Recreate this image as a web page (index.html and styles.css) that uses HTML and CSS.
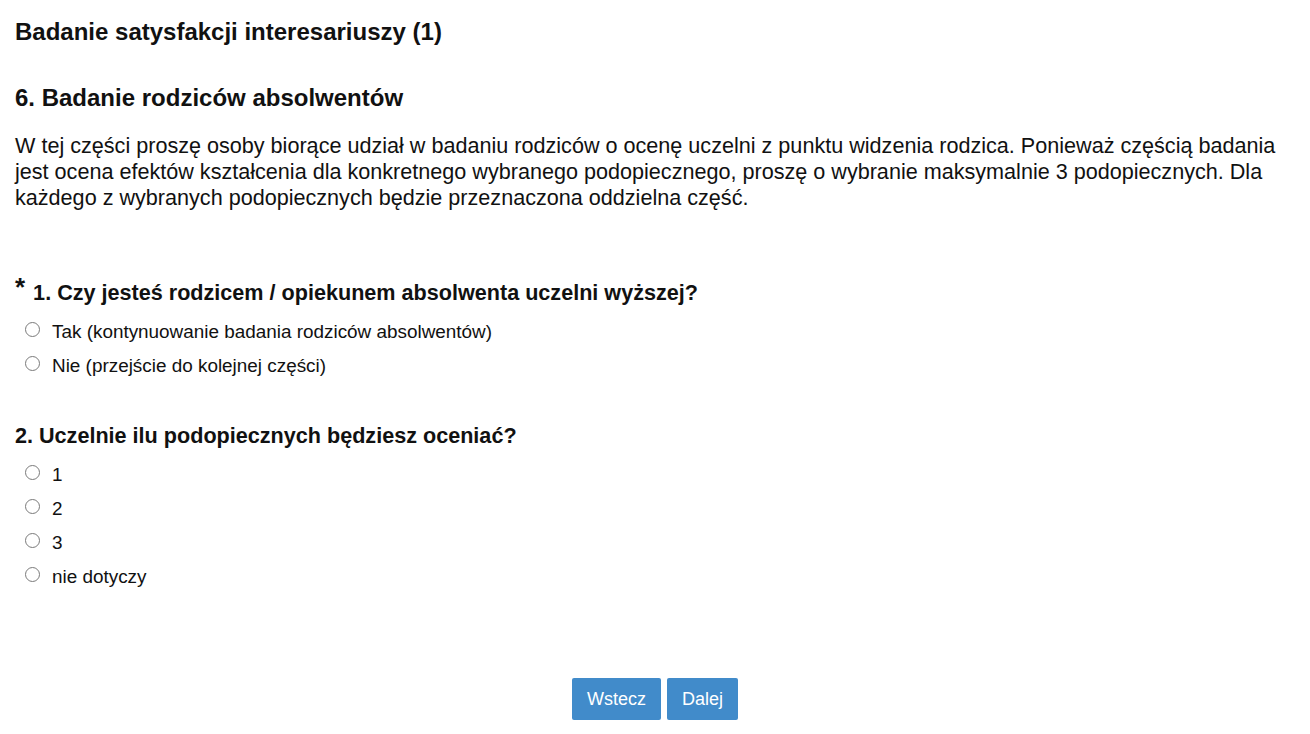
FILE: index.html
```html
<!DOCTYPE html>
<html lang="pl">
<head>
<meta charset="utf-8">
<title>Badanie satysfakcji interesariuszy</title>
<link rel="stylesheet" href="styles.css">
</head>
<body>
<div class="page">
  <h1 class="survey-title">Badanie satysfakcji interesariuszy (1)</h1>
  <h2 class="section-title">6. Badanie rodziców absolwentów</h2>
  <p class="intro">W tej części proszę osoby biorące udział w badaniu rodziców o ocenę uczelni z punktu widzenia rodzica. Ponieważ częścią badania jest ocena efektów kształcenia dla konkretnego wybranego podopiecznego, proszę o wybranie maksymalnie 3 podopiecznych. Dla każdego z wybranych podopiecznych będzie przeznaczona oddzielna część.</p>

  <div class="question q1">
    <h3 class="q-title"><span class="req">*</span> 1. Czy jesteś rodzicem / opiekunem absolwenta uczelni wyższej?</h3>
    <label class="opt"><input type="radio" name="q1"><span>Tak (kontynuowanie badania rodziców absolwentów)</span></label>
    <label class="opt"><input type="radio" name="q1"><span>Nie (przejście do kolejnej części)</span></label>
  </div>

  <div class="question q2">
    <h3 class="q-title">2. Uczelnie ilu podopiecznych będziesz oceniać?</h3>
    <label class="opt"><input type="radio" name="q2"><span>1</span></label>
    <label class="opt"><input type="radio" name="q2"><span>2</span></label>
    <label class="opt"><input type="radio" name="q2"><span>3</span></label>
    <label class="opt"><input type="radio" name="q2"><span>nie dotyczy</span></label>
  </div>

  <div class="nav">
    <button class="btn" type="button">Wstecz</button>
    <button class="btn" type="button">Dalej</button>
  </div>
</div>
</body>
</html>
```

FILE: styles.css
```css
html, body {
  margin: 0;
  padding: 0;
  background: #ffffff;
}
body {
  font-family: "Liberation Sans", Arial, sans-serif;
  color: #111111;
}
.page {
  padding: 0 15px;
  display: flex;
  flex-direction: column;
}
.survey-title {
  font-size: 24px;
  font-weight: bold;
  margin: 18px 0 0;
  line-height: 28px;
}
.section-title {
  font-size: 24px;
  font-weight: bold;
  margin: 38px 0 0;
  line-height: 28px;
}
.intro {
  font-size: 21.6px;
  line-height: 26px;
  margin: 21px 0 0;
}
.question {
  display: flex;
  flex-direction: column;
}
.q1 { margin-top: 69px; }
.q2 { margin-top: 40px; }
.q-title {
  font-size: 21.6px;
  font-weight: bold;
  margin: 0 0 9px;
  line-height: 26px;
}
.req {
  font-size: 26px;
  vertical-align: 4px;
  line-height: 0;
  margin-right: 2px;
}
.opt {
  display: flex;
  align-items: center;
  height: 34px;
  font-size: 18.9px;
  padding-left: 10px;
}
.opt input {
  appearance: none;
  -webkit-appearance: none;
  box-sizing: border-box;
  margin: 0 12px 0 0;
  width: 15px;
  height: 15px;
  border: 1px solid #7a7a7a;
  border-radius: 50%;
  background: #ffffff;
  position: relative;
  top: -3px;
  flex: none;
}
.nav {
  display: flex;
  justify-content: center;
  gap: 6px;
  margin-top: 84px;
}
.btn {
  background: #418bca;
  color: #ffffff;
  border: none;
  border-radius: 2px;
  font-family: "Liberation Sans", Arial, sans-serif;
  font-size: 18px;
  height: 42px;
  padding: 0 15px;
}
```
